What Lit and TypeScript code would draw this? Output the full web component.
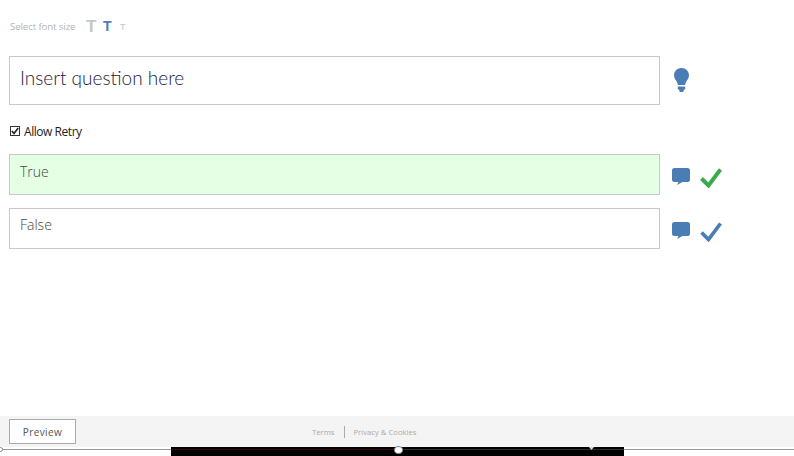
import { LitElement, html, css } from "lit";
import { customElement } from "lit/decorators.js";

const bulb = html`<svg class="bulb" width="15" height="24" viewBox="0 0 15 24"><path fill="#4a7db3" d="M7.500 0C3.300 0 0 3.200 0 7.200c0 3 1.700 4.600 2.800 6.500.6 1.100.9 2.100 1 3.300h7.400c.1-1.200.4-2.200 1-3.300C13.300 11.800 15 10.200 15 7.200 15 3.200 11.700 0 7.500 0zM3.800 18.500h7.400v2.700l-1.300.6L9.200 24H5.800l-.7-2.200-1.300-.6z"/></svg>`;
const bubble = html`<svg width="18" height="18" viewBox="0 0 18 18"><path fill="#4a7db3" d="M2.500 0h13A2.500 2.500 0 0 1 18 2.500v9a2.500 2.500 0 0 1-2.500 2.500H10.500l-5.500 3 1.500-3h-4A2.500 2.500 0 0 1 0 11.500v-9A2.500 2.500 0 0 1 2.500 0z"/></svg>`;
const check = (c: string, w: number) => html`<svg width="22" height="20" viewBox="0 0 22 20"><path fill="none" stroke="${c}" stroke-width="${w}" d="M1.500 10.500l7 7L20.500 1.500"/></svg>`;

@customElement("app-root")
export class AppRoot extends LitElement {
  static styles = css`
    :host { display: flex; flex-direction: column; width: 794px; height: 456px; background: #fff; overflow: hidden; font-family: "Open Sans", "Noto Sans", sans-serif; }
    .main { flex: 1; display: flex; flex-direction: column; padding: 0 0 0 9px; }
    .fonts { display: flex; align-items: center; height: 24px; margin-top: 14px; color: #b4b4b4; font-size: 9.7px; }
    .fonts .label { width: 77px; letter-spacing: -0.12px; padding-left: 1px; box-sizing: border-box; }
    .t { font-family: "Liberation Sans", sans-serif; font-weight: 700; line-height: 1; }
    .t1 { font-size: 17px; color: #c6c6c6; width: 17px; }
    .t2 { font-size: 14px; color: #4a7db3; width: 17px; }
    .t3 { font-size: 9px; color: #c6c6c6; font-weight: 400; margin-top: 2px; }
    .row { display: flex; align-items: flex-start; }
    .q { width: 651px; height: 49px; box-sizing: border-box; border: 1px solid #c8c8c8; padding: 0 10px 6px; display: flex; align-items: center; font-family: Lato, sans-serif; font-size: 19px; font-weight: 300; color: #1c1c3c; }
    .qrow { margin-top: 18px; }
    .bulb { margin: 12px 0 0 14px; }
    .retry { display: flex; align-items: center; height: 16px; margin-top: 18px; font-size: 12px; color: #222; letter-spacing: -0.45px; }
    .box { width: 10px; height: 10px; box-sizing: border-box; border: 1px solid #333; background: #fff; margin: 0 4px 0 1px; display: flex; }
    .ans { width: 651px; height: 41px; box-sizing: border-box; border: 1px solid #c8c8c8; padding: 6px 10px 0; font-size: 14px; font-weight: 300; color: #444; }
    .ans.ok { background: #e4ffe4; padding-top: 7px; }
    .a1 { margin-top: 15px; }
    .a2 { margin-top: 13px; }
    .icons { display: flex; align-items: flex-start; gap: 10px; margin-left: 12px; padding-top: 14px; }
    .footer { height: 31px; background: #f4f4f4; display: flex; align-items: center; padding-left: 9px; }
    .preview { width: 67px; height: 25px; box-sizing: border-box; border: 1px solid #aaa; background: #fff; display: flex; align-items: center; justify-content: center; font-size: 10px; letter-spacing: .4px; color: #555; }
    .links { margin-left: 236px; display: flex; align-items: center; font-size: 7.7px; color: #aea9a4; }
    .links .sep { width: 1px; height: 12px; background: #aaa; margin: 0 8px 0 10px; }
    .strip { height: 9px; display: flex; position: relative; }
    .side { background: #fff; padding-top: 2px; box-sizing: border-box; }
    .side::after { content: ""; display: block; width: 100%; height: 1px; background: #999; }
    .left { width: 171px; }
    .right { flex: 1; }
    .black { width: 453px; background: #000; padding-top: 2px; box-sizing: border-box; }
    .black::after { content: ""; display: block; height: 1px; background: linear-gradient(90deg, #3a0c0c 227px, #2c2c2c 227px); }
    .knob { position: absolute; left: 394px; top: -1px; width: 9px; height: 8px; border-radius: 50%; background: #fff; border: 1px solid #888; box-sizing: border-box; }
    .mini { position: absolute; left: 589px; top: 0; width: 5px; height: 3px; background: #ddd; clip-path: polygon(0 0, 100% 0, 50% 100%); }
    .dot { position: absolute; left: -2px; top: 0; width: 5px; height: 5px; border-radius: 50%; background: #fff; border: 1px solid #888; box-sizing: border-box; }
  `;
  render() {
    return html`
      <div class="main">
        <div class="fonts">
          <span class="label">Select font size</span>
          <span class="t t1">T</span><span class="t t2">T</span><span class="t t3">T</span>
        </div>
        <div class="row qrow"><div class="q">Insert question here</div>${bulb}</div>
        <div class="retry"><span class="box"><svg width="8" height="8" viewBox="0 0 8 8"><path fill="none" stroke="#222" stroke-width="1.600" d="M.8 4l2.200 2.400L7.200 1"/></svg></span>Allow Retry</div>
        <div class="row a1"><div class="ans ok">True</div><div class="icons">${bubble}${check("#3aaa4a", 4)}</div></div>
        <div class="row a2"><div class="ans">False</div><div class="icons">${bubble}${check("#4a7db3", 3.7)}</div></div>
      </div>
      <div class="footer">
        <div class="preview">Preview</div>
        <div class="links"><span>Terms</span><span class="sep"></span><span>Privacy &amp; Cookies</span></div>
      </div>
      <div class="strip">
        <div class="side left"></div><div class="black"></div><div class="side right"></div>
        <div class="dot"></div><div class="knob"></div><div class="mini"></div>
      </div>
    `;
  }
}
